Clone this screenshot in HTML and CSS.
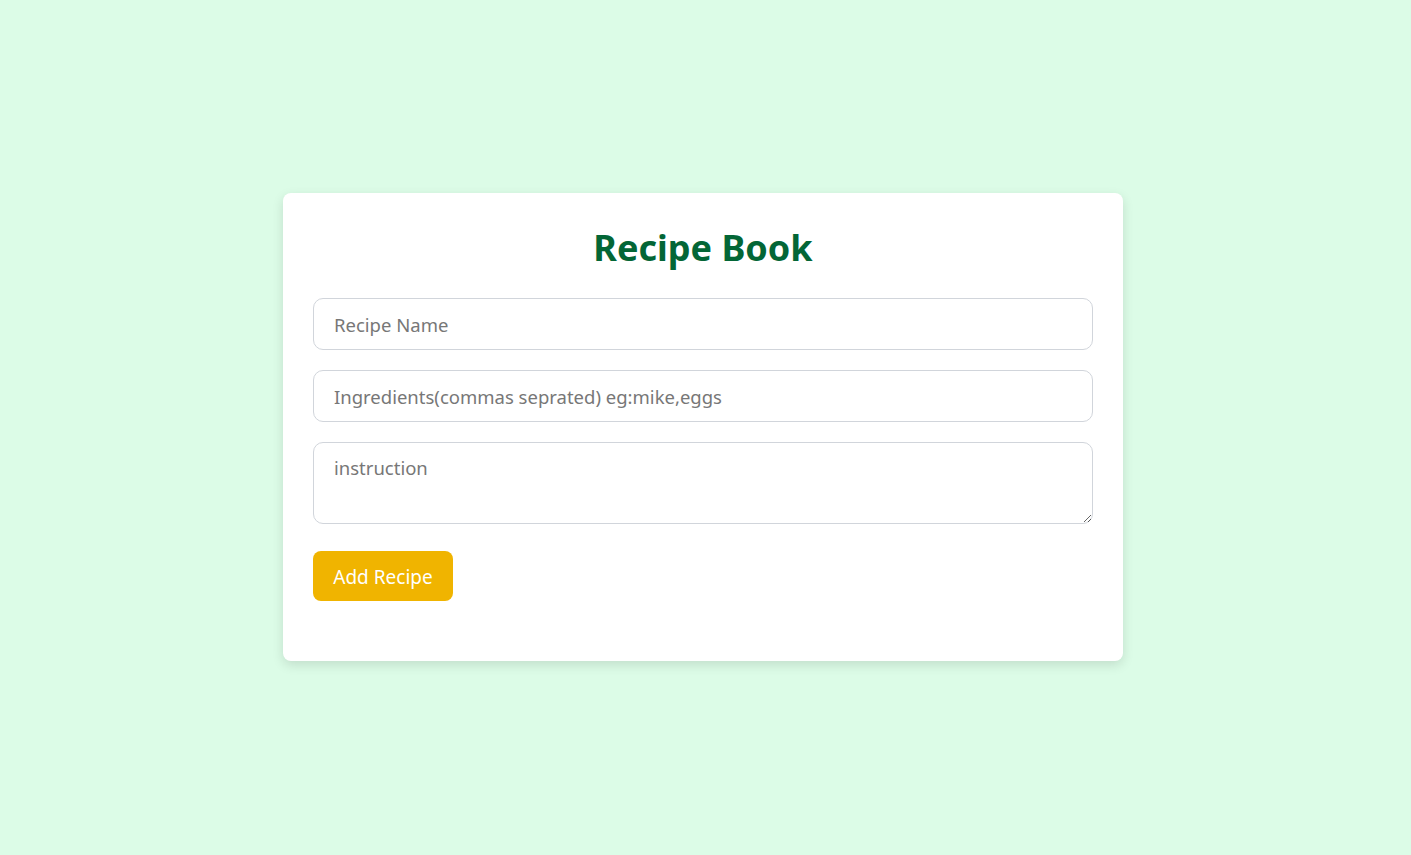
FILE: index.html
```html
<!DOCTYPE html>
<html lang="en">
<head>
<meta charset="utf-8">
<title>Recipe Book</title>
<link rel="stylesheet" href="styles.css">
</head>
<body>
<main class="page">
  <section class="card">
    <h1 class="title">Recipe Book</h1>
    <form class="form">
      <input class="field" type="text" placeholder="Recipe Name">
      <input class="field" type="text" placeholder="Ingredients(commas seprated) eg:mike,eggs">
      <textarea class="field area" placeholder="instruction"></textarea>
      <div class="actions"><button class="btn" type="button">Add Recipe</button></div>
    </form>
    <div class="list"></div>
  </section>
</main>
</body>
</html>
```

FILE: styles.css
```css
* { box-sizing: border-box; }
html, body { margin: 0; height: 100%; }
body {
  background: #dcfce7;
  font-family: "Segoe UI", "Noto Sans", "Open Sans", sans-serif;
}
.page {
  min-height: 100%;
  display: flex;
  align-items: center;
  justify-content: center;
  padding-right: 5px;
  padding-bottom: 1px;
}
.card {
  width: 840px;
  background: #fff;
  border-radius: 8px;
  padding: 30px 30px 60px;
  box-shadow: 0 4px 12px rgba(0, 0, 0, 0.12);
}
.title {
  margin: 0 0 28px;
  padding-top: 3px;
  text-align: center;
  color: #036636;
  font-size: 36px;
  line-height: 44px;
  font-weight: 700;
}
.form {
  display: flex;
  flex-direction: column;
  gap: 20px;
}
.field {
  width: 100%;
  height: 52px;
  padding: 0 20px;
  border: 1px solid #d1d5db;
  border-radius: 10px;
  font-family: inherit;
  font-size: 18.5px;
  color: #333;
  outline: none;
}
.field::placeholder { color: #777; }
.area {
  height: 82px;
  padding: 12px 20px;
  resize: vertical;
  line-height: 26px;
}
.actions { padding-top: 7px; }
.btn {
  width: 140px;
  height: 50px;
  padding-top: 2px;
  border: none;
  border-radius: 8px;
  background: #f0b400;
  color: #fff;
  font-family: inherit;
  font-size: 19px;
  cursor: pointer;
}
```
